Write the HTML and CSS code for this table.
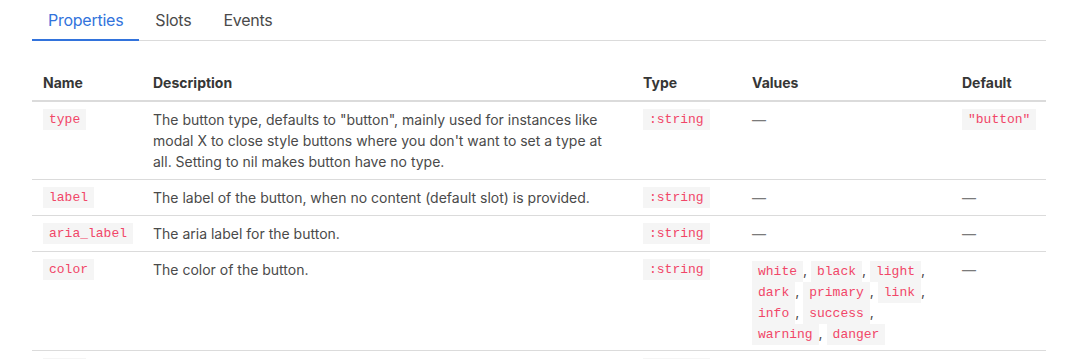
FILE: index.html
```html
<!DOCTYPE html>
<html>
<head>
<meta charset="utf-8">
<link rel="stylesheet" href="styles.css">
</head>
<body>
<div class="page">
  <nav class="tabs">
    <a class="tab active">Properties</a>
    <a class="tab">Slots</a>
    <a class="tab">Events</a>
  </nav>
  <table class="props">
    <colgroup>
      <col class="c-name"><col class="c-desc"><col class="c-type"><col class="c-values"><col class="c-default">
    </colgroup>
    <thead>
      <tr><th>Name</th><th>Description</th><th>Type</th><th>Values</th><th>Default</th></tr>
    </thead>
    <tbody>
      <tr>
        <td><code>type</code></td>
        <td>The button type, defaults to "button", mainly used for instances like modal X to close style buttons where you don't want to set a type at all. Setting to nil makes button have no type.</td>
        <td><code>:string</code></td>
        <td class="dash">—</td>
        <td><code>"button"</code></td>
      </tr>
      <tr>
        <td><code>label</code></td>
        <td>The label of the button, when no content (default slot) is provided.</td>
        <td><code>:string</code></td>
        <td class="dash">—</td>
        <td class="dash">—</td>
      </tr>
      <tr>
        <td><code>aria_label</code></td>
        <td>The aria label for the button.</td>
        <td><code>:string</code></td>
        <td class="dash">—</td>
        <td class="dash">—</td>
      </tr>
      <tr>
        <td><code>color</code></td>
        <td>The color of the button.</td>
        <td><code>:string</code></td>
        <td class="values"><code>white</code>, <code>black</code>, <code>light</code>, <code>dark</code>, <code>primary</code>, <code>link</code>, <code>info</code>, <code>success</code>, <code>warning</code>, <code>danger</code></td>
        <td class="dash">—</td>
      </tr>
      <tr>
        <td><code>size</code></td>
        <td>The size of the button.</td>
        <td><code>:string</code></td>
        <td class="dash">—</td>
        <td class="dash">—</td>
      </tr>
    </tbody>
  </table>
</div>
</body>
</html>
```

FILE: styles.css
```css
html, body {
  margin: 0;
  padding: 0;
  background: #fff;
}
body {
  font-family: "Inter", "Noto Sans", "Liberation Sans", sans-serif;
  color: #4a4a4a;
  font-size: 14px;
  line-height: 1.5;
}
.page {
  padding: 0 23px 0 32px;
}
.tabs {
  display: flex;
  border-bottom: 1px solid #dbdbdb;
  margin-bottom: 24px;
}
.tab {
  font-size: 16px;
  line-height: 24px;
  letter-spacing: -0.25px;
  padding: 8px 16px 7px;
  color: #4a4a4a;
  border-bottom: 2px solid transparent;
  margin-bottom: -1px;
}
.tab.active {
  color: #3273dc;
  border-bottom-color: #3273dc;
}
.props {
  width: 100%;
  border-collapse: collapse;
  table-layout: fixed;
}
.c-name { width: 110px; }
.c-desc { width: 490px; }
.c-type { width: 109px; }
.c-values { width: 210px; }
.c-default { width: 95px; }
.props th {
  text-align: left;
  color: #363636;
  font-weight: 700;
  padding: 7px 11px;
  border-bottom: 2px solid #dbdbdb;
}
.props td {
  vertical-align: top;
  padding: 7px 11px;
  border-bottom: 1px solid #dbdbdb;
}
.dash {
  color: #7a7a7a;
}
code {
  font-family: "Liberation Mono", "DejaVu Sans Mono", monospace;
  font-size: 13px;
  line-height: 1;
  vertical-align: 2px;
  color: #f14668;
  background: #f5f5f5;
  padding: 3px 6px;
  white-space: nowrap;
}
.values code {
  vertical-align: 0;
}
```
